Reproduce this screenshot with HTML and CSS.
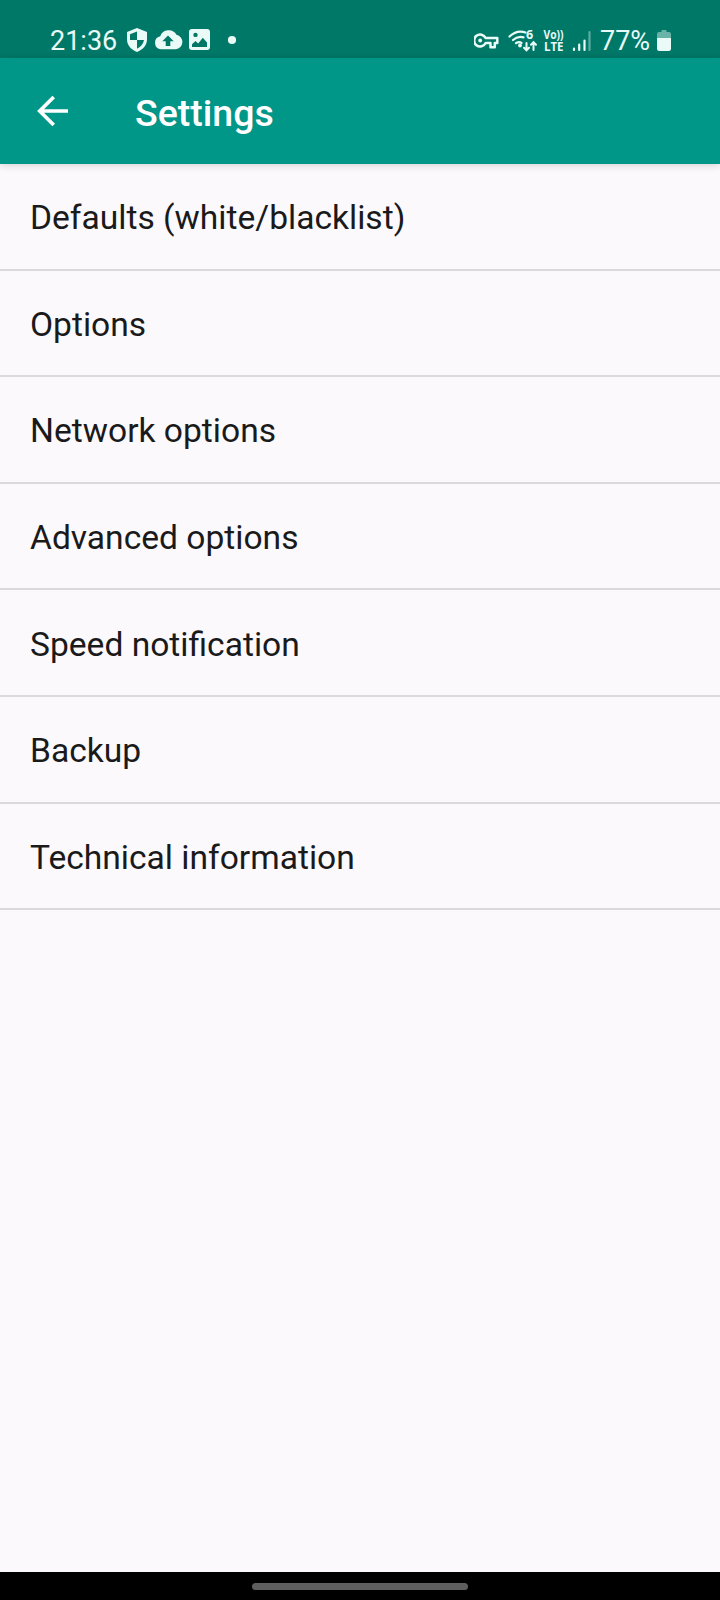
FILE: index.html
```html
<!DOCTYPE html>
<html lang="en">
<head>
<meta charset="utf-8">
<title>Settings</title>
<link rel="stylesheet" href="styles.css">
</head>
<body>
<div class="screen">
  <div class="status-bar">
    <span class="clock">21:36</span>
    <svg class="notification-icons" viewBox="0 0 120 30" fill="#e9faf7">
      <path fill-rule="evenodd" d="M10 2 20 6v7.500C20 19 16 23.500 10 26 4 23.500 0 19 0 13.500V6ZM10 5.500 3 8.300V14h7v8.800c4-2 6.500-5.300 7-8.800h-7Z"/>
      <path fill-rule="evenodd" d="M34 23.300a6.600 6.600 0 0 1-.8-13 9 9 0 0 1 16.300-1.600 7.400 7.400 0 0 1-.7 14.600ZM38.700 20h4.600v-4.700h3.400L41 9.600l-5.700 5.700h3.400Z"/>
      <path fill-rule="evenodd" d="M65 3h15a3 3 0 0 1 3 3v15a3 3 0 0 1-3 3H65a3 3 0 0 1-3-3V6a3 3 0 0 1 3-3Zm0 18h15v-4.500l-4.200-4.700-4.600 5.600-2.700-2.500L65 18.200ZM68.500 6.700a2.200 2.200 0 1 0 0 4.400 2.200 2.200 0 0 0 0-4.400Z"/>
      <circle cx="105" cy="14" r="4.100"/>
    </svg>
    <svg class="system-icons" viewBox="0 0 120 30" fill="none" stroke="#e9faf7">
      <path stroke-width="2.500" stroke-linejoin="round" d="M11.600 12a6 6 0 1 0 0 5h4.900v4.200h4.300V17h2.500v-5Z"/>
      <circle cx="6.200" cy="14.500" r="1.900" fill="#e9faf7" stroke="none"/>
      <g stroke-width="2.200" stroke-linecap="round">
        <path d="M35.500 10.500Q43 3.500 51.500 6.500M39 14q5-4.600 10.500-2.600M42 17.200q3-2 5.500-.3"/>
        <path stroke-width="2" d="M52.500 17v7m-2.500-2.300 2.500 2.600 2.500-2.600M59.500 24v-7.500m-2.500 2.300 2.500-2.600 2.500 2.600"/>
      </g>
      <circle cx="46" cy="19.500" r="1.900" fill="#e9faf7" stroke="none"/>
      <g class="radio-label" fill="#e9faf7" stroke="none">
        <text x="52" y="12.800" font-size="12.500">6</text>
        <text x="69.500" y="13" font-size="12" textLength="20" lengthAdjust="spacingAndGlyphs">Vo))</text>
        <text x="70" y="25" font-size="12.300" textLength="19.500" lengthAdjust="spacingAndGlyphs">LTE</text>
      </g>
      <g stroke-width="2.200" stroke-linecap="round">
        <path d="M100 22.500v1.500M105.200 18.500V24M110.500 14.500V24"/>
        <path stroke-opacity=".4" d="M115.500 6V24"/>
      </g>
    </svg>
    <span class="battery-level">77%</span>
    <svg class="battery" viewBox="0 0 14 22" fill="#e9faf7">
      <path fill-opacity=".45" d="M4.500 0h5v2H12a2 2 0 0 1 2 2v4H0V4a2 2 0 0 1 2-2h2.500Z"/>
      <path d="M0 8h14v10.500a2.500 2.500 0 0 1-2.500 2.500h-9A2.500 2.500 0 0 1 0 18.500Z"/>
    </svg>
  </div>
  <header class="toolbar">
    <svg class="back" viewBox="0 0 32 32" fill="none" stroke="#fff" stroke-width="3.700">
      <path d="M31 16H3M16.700 2 2.700 16l14 14"/>
    </svg>
    <h1 class="title">Settings</h1>
  </header>
  <ul class="settings-list">
    <li class="item">Defaults (white/blacklist)</li>
    <li class="item">Options</li>
    <li class="item">Network options</li>
    <li class="item">Advanced options</li>
    <li class="item">Speed notification</li>
    <li class="item">Backup</li>
    <li class="item">Technical information</li>
  </ul>
  <div class="nav-bar"><div class="handle"></div></div>
</div>
</body>
</html>
```
FILE: styles.css
```css
* { box-sizing: border-box; }
body { margin: 0; }
.screen {
  display: flex;
  flex-direction: column;
  width: 720px;
  height: 1600px;
  background: #fbf9fb;
  color: #1a1a1b;
  font-family: Roboto, sans-serif;
}
.status-bar {
  display: flex;
  align-items: flex-start;
  height: 58px;
  padding: 26px 49px 0 50px;
  background: #007868;
  color: #e9faf7;
}
.clock, .battery-level {
  font-size: 27px;
  line-height: 30px;
  white-space: nowrap;
}
.clock { width: 77px; }
.notification-icons, .system-icons { width: 120px; height: 30px; }
.system-icons { margin-left: auto; }
.radio-label { font-family: "Open Sans", sans-serif; font-weight: 700; }
.battery-level { width: 57px; margin-left: 6px; }
.battery { width: 14px; height: 22px; margin-top: 4px; }
.toolbar {
  display: flex;
  align-items: center;
  height: 106px;
  padding-left: 37px;
  background: #009688;
  color: #fff;
  box-shadow: 0 1px 8px rgba(0, 0, 0, .18);
}
.back { width: 32px; height: 32px; }
.title {
  margin: 4px 0 0 66px;
  font-size: 37.500px;
  font-weight: 500;
  line-height: 44px;
}
.settings-list {
  flex: 1;
  margin: 0;
  padding: 0;
  list-style: none;
}
.item {
  display: flex;
  align-items: center;
  height: 106.600px;
  padding: 3px 30px 0;
  border-bottom: 2px solid #dbd9db;
  font-size: 33.600px;
}
.nav-bar {
  display: flex;
  justify-content: center;
  height: 28px;
  padding-top: 11px;
  background: #000;
}
.handle {
  width: 216px;
  height: 7px;
  border-radius: 4px;
  background: #5e5e5e;
}
```
